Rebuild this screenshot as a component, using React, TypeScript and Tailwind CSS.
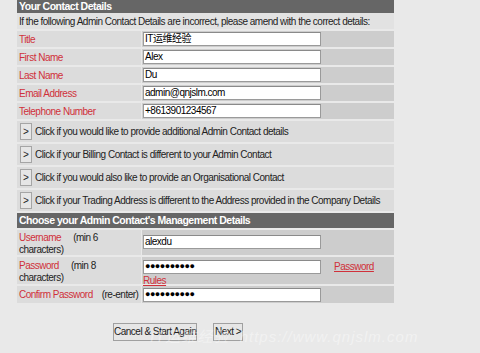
import React from "react"

const labelCls = "text-[#d0303a]"

const Field = ({ label, value, type = "text" }: { label: string; value: string; type?: string }) => (
    <div className="flex mt-[2px] h-[16px]">
        <div className="w-[124px] bg-[#dcdcdc] pl-[2px] flex items-center">
            <span className={labelCls}>{label}</span>
        </div>
        <div className="flex-1 ml-[1px] bg-[#cdcdcd] flex items-center pl-[1px]">
            <Input value={value} type={type} />
        </div>
    </div>
)

const Input = ({ value, type = "text" }: { value: string; type?: string }) => (
    <div className="w-[178px] h-[14px] bg-white border border-[#9a9a9a] border-t-[#8a8a8a] flex items-center pl-[1px] leading-none text-black whitespace-nowrap">
        {type === "password" ? (
            <span className="text-[9px] tracking-[-0.5px]">{"\u25CF".repeat(10)}</span>
        ) : (
            value
        )}
    </div>
)

const Toggle = ({ text }: { text: string }) => (
    <div className="flex items-center mt-[2px] h-[21px] bg-[#dcdcdc] pl-[3px] gap-[2px] whitespace-nowrap">
        <span className="w-[12px] h-[17px] border border-[#a5a5a5] bg-[#e6e6e6] flex items-center justify-center text-[10px] tracking-normal">&gt;</span>
        <span className="ml-[1px]">{text}</span>
    </div>
)

export default function App() {
    return (
        <div
            className="w-[480px] h-[353px] bg-[#e9e9e9] pl-[17px] text-[10px] tracking-[-0.5px] text-[#222] overflow-hidden relative"
            style={{ fontFamily: '"Liberation Sans", Arial, "Noto Sans CJK SC", sans-serif' }}
        >
            <div className="w-[377px]">
                <div className="h-[13px] bg-[#666666] text-white font-bold pl-[2px] leading-[13px] text-[10.5px]">Your Contact Details</div>
                <div className="h-[16px] bg-[#e2e2e2] pl-[2px] flex items-center whitespace-nowrap">
                    If the following Admin Contact Details are incorrect, please amend with the correct details:
                </div>
                <Field label="Title" value="IT运维经验" />
                <Field label="First Name" value="Alex" />
                <Field label="Last Name" value="Du" />
                <Field label="Email Address" value="admin@qnjslm.com" />
                <Field label="Telephone Number" value="+8613901234567" />

                <div className="mt-[2px]">
                    <Toggle text="Click if you would like to provide additional Admin Contact details" />
                    <Toggle text="Click if your Billing Contact is different to your Admin Contact" />
                    <Toggle text="Click if you would also like to provide an Organisational Contact" />
                    <Toggle text="Click if your Trading Address is different to the Address provided in the Company Details" />
                </div>

                <div className="mt-[2px] h-[15px] bg-[#666666] text-white font-bold pl-[2px] leading-[15px] text-[10.5px] whitespace-nowrap">
                    Choose your Admin Contact's Management Details
                </div>

                <div className="flex mt-[2px] h-[25px]">
                    <div className="w-[124px] bg-[#dcdcdc] pl-[2px] pt-[2px] leading-[12px]">
                        <div className="flex">
                            <span className={labelCls}>Username</span>
                            <span className="ml-[12px]">(min 6</span>
                        </div>
                        <div>characters)</div>
                    </div>
                    <div className="flex-1 ml-[1px] bg-[#cdcdcd] pl-[1px] pt-[5px]">
                        <Input value="alexdu" />
                    </div>
                </div>

                <div className="flex mt-[2px] h-[27px]">
                    <div className="w-[124px] bg-[#dcdcdc] pl-[2px] pt-[3px] leading-[12px]">
                        <div className="flex">
                            <span className={labelCls}>Password</span>
                            <span className="ml-[12px]">(min 8</span>
                        </div>
                        <div>characters)</div>
                    </div>
                    <div className="flex-1 ml-[1px] bg-[#cdcdcd] pl-[1px] pt-[2px]">
                        <div className="flex items-center">
                            <Input value="" type="password" />
                            <a className="ml-[13px] text-[#d0303a] underline">Password</a>
                        </div>
                        <a className="block text-[#d0303a] underline mt-[1px] leading-[12px]">Rules</a>
                    </div>
                </div>

                <div className="flex mt-[2px] h-[17px]">
                    <div className="w-[124px] bg-[#dcdcdc] pl-[2px] flex items-center whitespace-nowrap">
                        <span className={labelCls}>Confirm Password</span>
                        <span className="ml-[9px]">(re-enter)</span>
                    </div>
                    <div className="flex-1 ml-[1px] bg-[#cdcdcd] pl-[1px] flex items-center">
                        <Input value="" type="password" />
                    </div>
                </div>

                <div className="flex mt-[20px] pl-[96px] gap-[16px]">
                    <button className="h-[18px] w-[84px] border border-[#a0a0a0] bg-[#e6e6e6] text-[10px] text-[#222] leading-none whitespace-nowrap">
                        Cancel &amp; Start Again
                    </button>
                    <button className="h-[18px] w-[30px] border border-[#a0a0a0] bg-[#e6e6e6] text-[10px] text-[#222] leading-none whitespace-nowrap">
                        Next &gt;
                    </button>
                </div>
            </div>
            <div className="absolute left-[150px] top-[326px] text-[15px] text-white/40 italic tracking-[1px] pointer-events-none whitespace-nowrap">
                IT运维经验&nbsp;&nbsp;https://www.qnjslm.com
            </div>
        </div>
    )
}
